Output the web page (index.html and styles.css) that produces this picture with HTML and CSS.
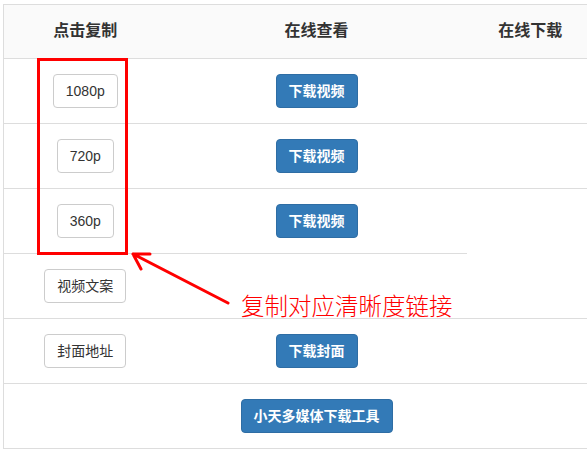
FILE: index.html
```html
<!DOCTYPE html>
<html lang="zh-CN">
<head>
  <meta charset="UTF-8">
  <meta name="viewport" content="width=device-width, initial-scale=1.0">
  <title>视频下载</title>
  <link rel="stylesheet" href="styles.css">
</head>
<body>

  <div class="page">
    <table class="dl-table">
      <colgroup>
        <col class="col-copy">
        <col class="col-view">
        <col class="col-down">
      </colgroup>
      <thead>
        <tr>
          <th>点击复制</th>
          <th>在线查看</th>
          <th>在线下载</th>
        </tr>
      </thead>
      <tbody>
        <tr>
          <td><button class="btn">1080p</button></td>
          <td><button class="btn btn-primary">下载视频</button></td>
          <td></td>
        </tr>
        <tr>
          <td><button class="btn">720p</button></td>
          <td><button class="btn btn-primary">下载视频</button></td>
          <td></td>
        </tr>
        <tr>
          <td><button class="btn">360p</button></td>
          <td><button class="btn btn-primary">下载视频</button></td>
          <td rowspan="2"></td>
        </tr>
        <tr>
          <td><button class="btn">视频文案</button></td>
          <td></td>
        </tr>
        <tr>
          <td><button class="btn">封面地址</button></td>
          <td><button class="btn btn-primary">下载封面</button></td>
          <td></td>
        </tr>
        <tr>
          <td></td>
          <td><button class="btn btn-primary">小天多媒体下载工具</button></td>
          <td></td>
        </tr>
      </tbody>
    </table>

    <!-- 标注 -->
    <svg class="mark" width="587" height="456" viewBox="0 0 587 456">
      <rect x="38.5" y="59.5" width="88" height="194" fill="none" stroke="#ff0000" stroke-width="3"/>
      <path d="M228 303 L133 254 M133 254 L150 254 M133 254 L141 269" fill="none" stroke="#ff0000" stroke-width="3" stroke-linecap="round"/>
    </svg>
    <div class="note">复制对应清晰度链接</div>
  </div>

</body>
</html>
```

FILE: styles.css
```css
body{
  margin: 0;
  font-family: "Liberation Sans", "Noto Sans CJK SC", sans-serif;
  font-size: 14px;
  color: #333;
  background: #fff;
}

.page{
  position: relative;
  width: 587px;
  height: 456px;
  overflow: hidden;
  padding: 4px 0 0 3px;
  box-sizing: border-box;
}

.dl-table{
  width: 591px;
  table-layout: fixed;
  border-collapse: collapse;
  border: 1px solid #ddd;
}

.col-copy{ width: 163px; }
.col-view{ width: 300px; }
.col-down{ width: 128px; }

.dl-table th{
  padding: 16px 8px 17px;
  font-size: 16px;
  line-height: 20px;
  font-weight: bold;
  text-align: center;
  background-color: #fafafa;
  border-bottom: 1px solid #ddd;
}

.dl-table td{
  height: 34px;
  padding: 15px 8px;
  text-align: center;
  vertical-align: middle;
  border-top: 1px solid #ddd;
  line-height: 34px;
}

.btn{
  display: inline-block;
  height: 34px;
  padding: 6px 12px;
  font-family: inherit;
  font-size: 14px;
  line-height: 20px;
  color: #333;
  background-color: #fff;
  border: 1px solid #ccc;
  border-radius: 4px;
  box-sizing: border-box;
  vertical-align: top;
  cursor: pointer;
}

.btn-primary{
  color: #fff;
  font-weight: bold;
  background-color: #337ab7;
  border-color: #2e6da4;
}

.mark{
  position: absolute;
  left: 0;
  top: 0;
  pointer-events: none;
}

.note{
  position: absolute;
  left: 241px;
  top: 289px;
  font-family: "Noto Sans CJK SC", sans-serif;
  font-size: 23.5px;
  font-weight: 300;
  line-height: 32px;
  color: #ff0000;
  white-space: nowrap;
}
```
